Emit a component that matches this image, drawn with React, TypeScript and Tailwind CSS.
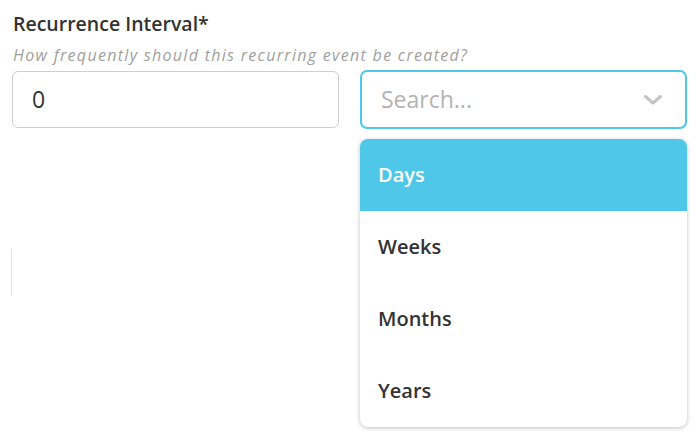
const options = ["Days", "Weeks", "Months", "Years"];

export default function App() {
  return (
    <div className="w-[700px] h-[438px] bg-white font-['Open_Sans','Liberation_Sans',sans-serif] text-[#333] overflow-hidden">
      <div className="pt-[12px] pl-[13px]">
        <h2 className="text-[19.5px] font-semibold leading-[24px] text-[#333]">
          Recurrence Interval*
        </h2>
        <p className="mt-[10px] text-[16px] italic leading-[18px] tracking-[1.3px] text-[#a0a0a0]">
          How frequently should this recurring event be created?
        </p>
      </div>

      <div className="mt-[7px] pl-[12px] pr-[13px] grid grid-cols-2 gap-[21px]">
        <div className="h-[57px] rounded-[6px] border border-[#cfcfcf] flex items-center px-[19px]">
          <span className="text-[23px] text-[#333]">0</span>
        </div>

        <div className="relative">
          <div className="h-[59px] -mt-[1px] rounded-[7px] border-2 border-[#4ec7e8] flex items-center justify-between pl-[19px] pr-[22px]">
            <span className="text-[23px] text-[#b3b3b3]">Search...</span>
            <svg width="20" height="12" viewBox="0 0 20 12" fill="none">
              <path d="M2.5 2.5 L10 9 L17.5 2.5" stroke="#c4c4c4" strokeWidth="3" strokeLinecap="round" strokeLinejoin="round" />
            </svg>
          </div>

          <div className="absolute left-0 right-0 top-[68px] rounded-[8px] bg-white overflow-hidden shadow-[0_1px_4px_rgba(0,0,0,0.25)] z-10">
            {options.map((o, i) => (
              <div
                key={o}
                className={
                  i === 0
                    ? "h-[72px] flex items-center px-[18px] bg-[#4ec7e8] text-white text-[20px] font-semibold"
                    : "h-[72px] flex items-center px-[18px] text-[#333] text-[20px] font-semibold"
                }
              >
                {o}
              </div>
            ))}
          </div>
        </div>
      </div>

      <div className="mt-[120px] ml-[11px] w-px h-[47px] bg-[#e2e2e2]" />
    </div>
  );
}
